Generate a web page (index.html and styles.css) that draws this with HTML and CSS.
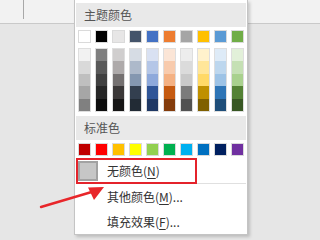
FILE: index.html
```html
<!DOCTYPE html>
<html lang="zh">
<head>
<meta charset="utf-8">
<link rel="stylesheet" href="styles.css">
</head>
<body>
<div class="topbar"><div class="tb-cell"></div></div>

<div class="menu">
  <div class="sec-head">主题颜色</div>
  <div class="swatches">
    <span class="sw" style="background:#ffffff"></span>
    <span class="sw" style="background:#000000"></span>
    <span class="sw" style="background:#e7e6e6"></span>
    <span class="sw" style="background:#44546a"></span>
    <span class="sw" style="background:#4472c4"></span>
    <span class="sw" style="background:#ed7d31"></span>
    <span class="sw" style="background:#a5a5a5"></span>
    <span class="sw" style="background:#ffc000"></span>
    <span class="sw" style="background:#5b9bd5"></span>
    <span class="sw" style="background:#70ad47"></span>
  </div>
  <div class="shades">
    <div class="col"><i style="background:#f2f2f2"></i><i style="background:#d9d9d9"></i><i style="background:#bfbfbf"></i><i style="background:#a6a6a6"></i><i style="background:#808080"></i></div>
    <div class="col"><i style="background:#7f7f7f"></i><i style="background:#595959"></i><i style="background:#404040"></i><i style="background:#262626"></i><i style="background:#0d0d0d"></i></div>
    <div class="col"><i style="background:#d0cece"></i><i style="background:#aeaaaa"></i><i style="background:#757171"></i><i style="background:#3b3838"></i><i style="background:#171616"></i></div>
    <div class="col"><i style="background:#d6dce4"></i><i style="background:#adb9ca"></i><i style="background:#8497b0"></i><i style="background:#333f4f"></i><i style="background:#222b35"></i></div>
    <div class="col"><i style="background:#d9e1f2"></i><i style="background:#b4c6e7"></i><i style="background:#8ea9db"></i><i style="background:#2f5597"></i><i style="background:#1f3864"></i></div>
    <div class="col"><i style="background:#fbe5d6"></i><i style="background:#f8cbad"></i><i style="background:#f4b183"></i><i style="background:#c55a11"></i><i style="background:#843c0c"></i></div>
    <div class="col"><i style="background:#ededed"></i><i style="background:#dbdbdb"></i><i style="background:#c9c9c9"></i><i style="background:#7b7b7b"></i><i style="background:#525252"></i></div>
    <div class="col"><i style="background:#fff2cc"></i><i style="background:#ffe699"></i><i style="background:#ffd966"></i><i style="background:#bf9000"></i><i style="background:#7f6000"></i></div>
    <div class="col"><i style="background:#deebf7"></i><i style="background:#bdd7ee"></i><i style="background:#9dc3e6"></i><i style="background:#2e75b6"></i><i style="background:#1f4e79"></i></div>
    <div class="col"><i style="background:#e2f0d9"></i><i style="background:#c5e0b4"></i><i style="background:#a9d18e"></i><i style="background:#548235"></i><i style="background:#385723"></i></div>
  </div>
  <div class="sec-head sec-std">标准色</div>
  <div class="swatches">
    <span class="sw" style="background:#c00000"></span>
    <span class="sw" style="background:#ff0000"></span>
    <span class="sw" style="background:#ffc000"></span>
    <span class="sw" style="background:#ffff00"></span>
    <span class="sw" style="background:#92d050"></span>
    <span class="sw" style="background:#00b050"></span>
    <span class="sw" style="background:#00b0f0"></span>
    <span class="sw" style="background:#0070c0"></span>
    <span class="sw" style="background:#002060"></span>
    <span class="sw" style="background:#7030a0"></span>
  </div>
  <div class="item item-none">
    <span class="none-icon"></span>
    <span class="label">无颜色(<u>N</u>)</span>
    <span class="mark"></span>
  </div>
  <div class="sep"></div>
  <div class="item"><span class="label">其他颜色(<u>M</u>)...</span></div>
  <div class="item"><span class="label">填充效果(<u>F</u>)...</span></div>
</div>

<svg class="arrow" width="320" height="240" viewBox="0 0 320 240">
  <line x1="41" y1="207" x2="95" y2="191" stroke="#e8262a" stroke-width="2.4" stroke-linecap="round"/>
  <polygon points="104,187 88,187.5 94,200" fill="#e8262a"/>
</svg>
</body>
</html>
```

FILE: styles.css
```css
* { box-sizing: border-box; }
html, body { margin: 0; padding: 0; }
body {
  width: 320px;
  height: 240px;
  background: #e6e6e6;
  overflow: hidden;
  position: relative;
  font-family: "Noto Sans CJK SC", "Noto Sans", sans-serif;
  font-size: 12px;
}
.topbar {
  height: 24px;
  background: #f2f2f2;
  border-bottom: 1px solid #c9c9c9;
}
.tb-cell {
  width: 24px;
  height: 19px;
  border-right: 1px solid #a8a8a8;
}
.menu {
  position: absolute;
  left: 74px;
  top: 0;
  width: 174px;
  height: 235px;
  background: #fff;
  border: 1px solid #c4c4c4;
  border-top: none;
  padding: 3px 1px 0 1px;
  box-shadow: 2px 2px 3px rgba(0, 0, 0, 0.18);
  display: flex;
  flex-direction: column;
}
.sec-head {
  height: 24px;
  background: #e9e9e9;
  color: #555;
  padding-left: 8px;
  display: flex;
  align-items: center;
  line-height: 1;
}
.sec-std { margin-top: 4px; }
.swatches {
  display: flex;
  gap: 4px;
  padding-left: 2px;
  margin-top: 3px;
}
.sw {
  width: 13px;
  height: 13px;
  border: 1px solid #dadada;
}
.shades {
  display: flex;
  gap: 4px;
  padding-left: 2px;
  margin-top: 5px;
}
.col {
  width: 13px;
  height: 64px;
  border: 1px solid #dedede;
  display: flex;
  flex-direction: column;
}
.col i { flex: 1; display: block; }
.item {
  height: 25px;
  display: flex;
  align-items: center;
  padding-left: 31px;
  color: #333;
  position: relative;
}
.item-none {
  margin-top: 2px;
  padding-left: 2px;
  gap: 9px;
}
.none-icon {
  width: 20px;
  height: 20px;
  background: #c6c6c6;
  border: 2px solid #a2a2a2;
}
.label { line-height: 1; }
.label u { text-underline-offset: 2px; }
.mark {
  position: absolute;
  left: 0;
  top: 0;
  width: 121px;
  height: 26px;
  border: 2px solid #e4232b;
}
.sep {
  height: 1px;
  background: #e0e0e0;
  margin-left: 1px;
}
.arrow {
  position: absolute;
  left: 0;
  top: 0;
}
```
